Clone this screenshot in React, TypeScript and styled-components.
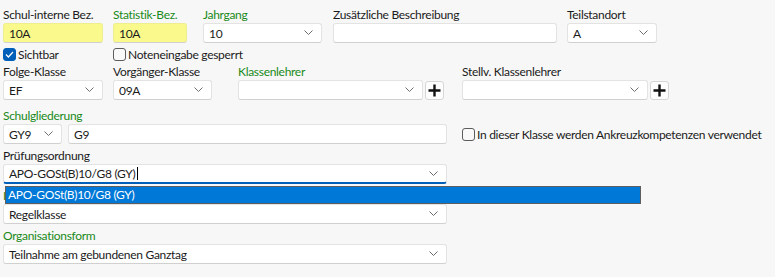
import React from 'react';
import styled, { createGlobalStyle } from 'styled-components';

const GlobalStyle = createGlobalStyle`
  html, body {
    margin: 0;
    padding: 0;
    background: #f7f7f7;
  }
  body {
    font-family: Lato, "Noto Sans", sans-serif;
    font-size: 12px;
    letter-spacing: -0.3px;
    color: #1b1b1b;
  }
`;

const Page = styled.div`
  width: 775px;
  height: 277px;
  padding: 7px 0 0 3px;
  box-sizing: border-box;
  overflow: hidden;
`;

const Row = styled.div<{ $mt?: number }>`
  display: flex;
  align-items: flex-end;
  margin-top: ${({ $mt }) => $mt ?? 0}px;
`;

const Field = styled.div<{ $w: number; $ml?: number }>`
  position: relative;
  display: flex;
  flex-direction: column;
  width: ${({ $w }) => $w}px;
  margin-left: ${({ $ml }) => $ml ?? 0}px;
`;

const Label = styled.div<{ $green?: boolean }>`
  height: 16px;
  line-height: 16px;
  white-space: nowrap;
  color: ${({ $green }) => ($green ? '#198a19' : '#1b1b1b')};
`;

const Input = styled.div<{ $yellow?: boolean; $focus?: boolean }>`
  position: relative;
  height: 20px;
  box-sizing: border-box;
  display: flex;
  align-items: center;
  padding: 0 5px;
  background: ${({ $yellow }) => ($yellow ? '#fafa8c' : '#ffffff')};
  border: 1px solid ${({ $yellow }) => ($yellow ? '#eeee90' : '#e3e3e3')};
  border-bottom: ${({ $focus }) => ($focus ? '2px solid #005fb8' : '1px solid #d0d0d0')};
  border-radius: 3px;
  white-space: nowrap;
`;

const Chevron = styled.svg`
  position: absolute;
  right: 8px;
  top: 50%;
  margin-top: -3px;
  width: 9px;
  height: 5px;
`;

const Caret = styled.span`
  display: inline-block;
  width: 1px;
  height: 13px;
  margin-left: 1px;
  background: #000;
`;

const PlusButton = styled.div`
  width: 19px;
  height: 19px;
  margin-left: 2px;
  box-sizing: border-box;
  border: 1px solid #d6d6d6;
  border-radius: 3px;
  background: #fdfdfd;
  display: flex;
  align-items: center;
  justify-content: center;
`;

const Check = styled.label<{ $w?: number; $ml?: number; $mb?: number }>`
  display: flex;
  align-items: center;
  height: 16px;
  width: ${({ $w }) => ($w ? `${$w}px` : 'auto')};
  margin-left: ${({ $ml }) => $ml ?? 0}px;
  margin-bottom: ${({ $mb }) => $mb ?? 0}px;
  white-space: nowrap;
`;

const Box = styled.span<{ $checked?: boolean }>`
  width: 13px;
  height: 13px;
  box-sizing: border-box;
  border-radius: 3px;
  margin-right: 2px;
  display: flex;
  align-items: center;
  justify-content: center;
  background: ${({ $checked }) => ($checked ? '#005fb8' : '#f9f9f9')};
  border: 1px solid ${({ $checked }) => ($checked ? '#005fb8' : '#5c5c5c')};
`;

const DropList = styled.div`
  position: absolute;
  left: 2px;
  top: 38px;
  width: 636px;
  height: 18px;
  box-sizing: border-box;
  background: #0078d7;
  border: 1px solid #5e5e5e;
  color: #fff;
  padding-left: 2px;
  line-height: 16px;
  z-index: 2;
`;

const Combo = ({ value, focus, children }: { value?: string; focus?: boolean; children?: React.ReactNode }) => (
  <Input $focus={focus}>
    {value}
    {children}
    <Chevron viewBox="0 0 9 5">
      <path d="M0.5 0.5 L4.5 4.5 L8.5 0.5" fill="none" stroke="#6e6e6e" strokeWidth="1" />
    </Chevron>
  </Input>
);

const Plus = () => (
  <PlusButton>
    <svg width="13" height="13" viewBox="0 0 13 13">
      <path d="M6.5 0.5 V12.5 M0.5 6.5 H12.5" stroke="#111" strokeWidth="2.4" />
    </svg>
  </PlusButton>
);

const CheckBox = ({ checked, text, w, ml, mb }: { checked?: boolean; text: string; w?: number; ml?: number; mb?: number }) => (
  <Check $w={w} $ml={ml} $mb={mb}>
    <Box $checked={checked}>
      {checked && (
        <svg width="9" height="7" viewBox="0 0 9 7">
          <path d="M1 3.5 L3.4 6 L8 1" fill="none" stroke="#fff" strokeWidth="1.2" />
        </svg>
      )}
    </Box>
    {text}
  </Check>
);

export default function App() {
  return (
    <Page>
      <GlobalStyle />
      <Row>
        <Field $w={100}>
          <Label>Schul-interne Bez.</Label>
          <Input $yellow>10A</Input>
        </Field>
        <Field $w={74} $ml={10}>
          <Label $green>Statistik-Bez.</Label>
          <Input $yellow>10A</Input>
        </Field>
        <Field $w={119} $ml={16}>
          <Label $green>Jahrgang</Label>
          <Combo value="10" />
        </Field>
        <Field $w={224} $ml={11}>
          <Label>Zusätzliche Beschreibung</Label>
          <Input />
        </Field>
        <Field $w={90} $ml={10}>
          <Label>Teilstandort</Label>
          <Combo value="A" />
        </Field>
      </Row>
      <Row $mt={3}>
        <CheckBox checked text="Sichtbar" w={110} />
        <CheckBox text="Noteneingabe gesperrt" />
      </Row>
      <Row $mt={2}>
        <Field $w={100}>
          <Label>Folge-Klasse</Label>
          <Combo value="EF" />
        </Field>
        <Field $w={99} $ml={10}>
          <Label>Vorgänger-Klasse</Label>
          <Combo value="09A" />
        </Field>
        <Field $w={185} $ml={26}>
          <Label $green>Klassenlehrer</Label>
          <Combo />
        </Field>
        <Plus />
        <Field $w={186} $ml={18}>
          <Label>Stellv. Klassenlehrer</Label>
          <Combo />
        </Field>
        <Plus />
      </Row>
      <Row $mt={8}>
        <Field $w={59}>
          <Label $green>Schulgliederung</Label>
          <Combo value="GY9" />
        </Field>
        <Field $w={379} $ml={6}>
          <Input>G9</Input>
        </Field>
        <CheckBox text="In dieser Klasse werden Ankreuzkompetenzen verwendet" ml={15} mb={2} />
      </Row>
      <Row $mt={4}>
        <Field $w={444}>
          <Label>Prüfungsordnung</Label>
          <Combo focus>
            APO-GOSt(B)10/G8 (GY)
            <Caret />
          </Combo>
          <DropList>APO-GOSt(B)10/G8 (GY)</DropList>
        </Field>
      </Row>
      <Row $mt={4}>
        <Field $w={444}>
          <Label $green>Klassenart</Label>
          <Combo value="Regelklasse" />
        </Field>
      </Row>
      <Row $mt={4}>
        <Field $w={444}>
          <Label $green>Organisationsform</Label>
          <Combo value="Teilnahme am gebundenen Ganztag" />
        </Field>
      </Row>
    </Page>
  );
}
